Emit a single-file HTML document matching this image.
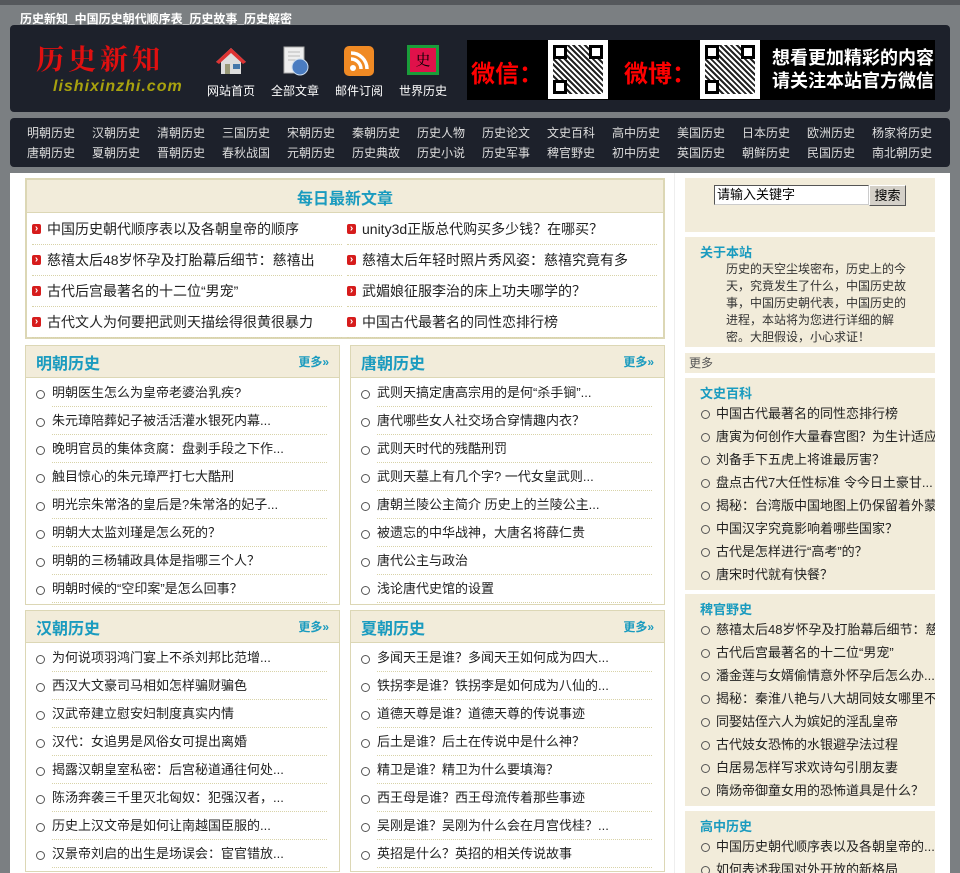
<!DOCTYPE html>
<html><head><meta charset="utf-8"><style>
*{margin:0;padding:0;box-sizing:border-box}
body{width:960px;height:873px;overflow:hidden;background:#7b7f82;font-family:"Liberation Sans","Noto Sans CJK SC","WenQuanYi Zen Hei",sans-serif;position:relative}
.abs{position:absolute}
.top{left:0;top:0;width:960px;height:5px;background:#55585c}
.ttl{left:20px;top:10px;color:#fff;font-weight:bold;font-size:12px}
.hdr{left:10px;top:25px;width:940px;height:87px;background:#1d212b;border-radius:4px}
.nav{left:10px;top:118px;width:940px;height:49px;background:#1d212b;border-radius:4px}
.nav span{position:absolute;color:#ddd;font-size:12px;white-space:nowrap}
.ico{color:#fff;font-size:12px;text-align:center;width:60px}
.main{left:10px;top:173px;width:940px;height:700px;background:#fff}
.box{background:#fff;border:1px solid #dcd7b5}
.bh{background:#f2ecda;border-bottom:1px solid #dcd7b5;height:32px;position:relative}
.bh b{position:absolute;left:10px;top:4px;color:#1a9bbf;font-size:16px}
.bh i{position:absolute;right:10px;top:7px;color:#1a9bbf;font-size:12px;font-style:normal;font-weight:bold}
ul{list-style:none}
.cl li{position:relative;height:28px;line-height:28px;font-size:13px;color:#222;padding-left:26px;white-space:nowrap;overflow:hidden}
.cl li:before{content:"";position:absolute;left:10px;top:11px;width:7px;height:7px;border:1px solid #555;border-radius:50%}
.cl li:after{content:"";position:absolute;left:26px;right:12px;bottom:0;border-bottom:1px dotted #d8d3a8}
.lt li{position:absolute;height:31px;line-height:31px;font-size:14px;color:#222;padding-left:15px;width:310px;white-space:nowrap;overflow:hidden;border-bottom:1px dotted #d8d3a8}
.lt li:before{content:"›";position:absolute;left:0;top:10px;width:9px;height:10px;line-height:9px;background:#d61c1c;color:#fff;font-size:10px;text-align:center;border-radius:2px;font-weight:bold}
.sb{background:#f2ecda;position:absolute;left:685px;width:250px;overflow:hidden}
.sb h4{color:#1a9bbf;font-size:13px;margin:5px 0 0 15px}
.sl li{position:relative;height:23px;line-height:23px;font-size:13px;color:#222;padding-left:31px;white-space:nowrap}
.sl li:before{content:"";position:absolute;left:16px;top:8px;width:7px;height:7px;border:1px solid #555;border-radius:50%}
.qr{position:absolute;background:#fff;padding:5px}
.qr div{width:100%;height:100%;background:
linear-gradient(#fff,#fff) 3px 3px/8px 8px no-repeat,linear-gradient(#000,#000) 0 0/14px 14px no-repeat,
linear-gradient(#fff,#fff) 39px 3px/8px 8px no-repeat,linear-gradient(#000,#000) 36px 0/14px 14px no-repeat,
linear-gradient(#fff,#fff) 3px 38px/8px 8px no-repeat,linear-gradient(#000,#000) 0 35px/14px 14px no-repeat,
repeating-linear-gradient(45deg,#222 0 2px,#fff 2px 4px),#fff}
</style></head><body>
<div class="abs top"></div>
<div class="abs ttl">历史新知_中国历史朝代顺序表_历史故事_历史解密</div>
<div class="abs hdr"></div>
<div class="abs" style="left:36px;top:38px;color:#e01010;font-size:28px;font-family:'Noto Serif CJK SC',serif;font-weight:bold;letter-spacing:4px">历史新知</div>
<div class="abs" style="left:53px;top:78px;color:#a8a20e;font-size:16px;font-style:italic;font-weight:bold;letter-spacing:1px">lishixinzhi.com</div>
<svg class="abs" style="left:215px;top:46px" width="32" height="30"><path d="M16 2L1 16h5v12h20V16h5z" fill="#ddd"/><path d="M16 2L1 16l3 2L16 7l12 11 3-2z" fill="#d33"/><rect x="10" y="18" width="5" height="10" fill="#997"/><rect x="18" y="18" width="7" height="5" fill="#47a"/></svg>
<svg class="abs" style="left:282px;top:46px" width="28" height="30"><rect x="2" y="1" width="20" height="26" fill="#eee" stroke="#aaa"/><path d="M6 6h12M6 10h12M6 14h8" stroke="#bbb"/><circle cx="18" cy="21" r="8" fill="#4a7cc0"/><circle cx="18" cy="21" r="8" fill="none" stroke="#cde"/></svg>
<div class="abs" style="left:344px;top:46px;width:30px;height:30px;background:#f08a24;border-radius:5px"></div>
<svg class="abs" style="left:344px;top:46px" width="30" height="30"><circle cx="9" cy="22" r="3" fill="#fff"/><path d="M7 13a10 10 0 0 1 10 10M7 7a16 16 0 0 1 16 16" stroke="#fff" stroke-width="3.5" fill="none"/></svg>
<div class="abs" style="left:407px;top:45px;width:32px;height:30px;background:#e0114a;border:3px solid #1a9d3a;font-size:15px;text-align:center;line-height:24px;font-family:'Noto Serif CJK SC',serif">史</div>
<div class="abs ico" style="left:201px;top:82px">网站首页</div>
<div class="abs ico" style="left:265px;top:82px">全部文章</div>
<div class="abs ico" style="left:329px;top:82px">邮件订阅</div>
<div class="abs ico" style="left:393px;top:82px">世界历史</div>
<div class="abs" style="left:467px;top:40px;width:468px;height:60px;background:#000"></div>
<div class="abs" style="left:471px;top:54px;color:#f00;font-size:24px;font-weight:bold">微信：</div>
<div class="qr" style="left:548px;top:40px;width:60px;height:59px"><div></div></div>
<div class="abs" style="left:624px;top:54px;color:#f00;font-size:24px;font-weight:bold">微博：</div>
<div class="qr" style="left:700px;top:40px;width:60px;height:59px"><div></div></div>
<div class="abs" style="left:772px;top:47px;color:#fff;font-size:18px;font-weight:bold;line-height:23px">想看更加精彩的内容<br>请关注本站官方微信</div>
<div class="abs nav">
<span style="left:17px;top:6px">明朝历史</span><span style="left:82px;top:6px">汉朝历史</span><span style="left:147px;top:6px">清朝历史</span><span style="left:212px;top:6px">三国历史</span><span style="left:277px;top:6px">宋朝历史</span><span style="left:342px;top:6px">秦朝历史</span><span style="left:407px;top:6px">历史人物</span><span style="left:472px;top:6px">历史论文</span><span style="left:537px;top:6px">文史百科</span><span style="left:602px;top:6px">高中历史</span><span style="left:667px;top:6px">美国历史</span><span style="left:732px;top:6px">日本历史</span><span style="left:797px;top:6px">欧洲历史</span><span style="left:862px;top:6px">杨家将历史</span>
<span style="left:17px;top:26px">唐朝历史</span><span style="left:82px;top:26px">夏朝历史</span><span style="left:147px;top:26px">晋朝历史</span><span style="left:212px;top:26px">春秋战国</span><span style="left:277px;top:26px">元朝历史</span><span style="left:342px;top:26px">历史典故</span><span style="left:407px;top:26px">历史小说</span><span style="left:472px;top:26px">历史军事</span><span style="left:537px;top:26px">稗官野史</span><span style="left:602px;top:26px">初中历史</span><span style="left:667px;top:26px">英国历史</span><span style="left:732px;top:26px">朝鲜历史</span><span style="left:797px;top:26px">民国历史</span><span style="left:862px;top:26px">南北朝历史</span>
</div>
<div class="abs main"></div>
<div class="abs" style="left:674px;top:173px;width:1px;height:700px;background:#eee"></div>
<div class="abs box" style="left:25px;top:178px;width:640px;height:161px;border-width:2px">
<div class="bh" style="height:33px"><b style="left:0;width:100%;text-align:center;top:5px">每日最新文章</b></div>
<ul class="lt">
<li style="left:5px;top:34px">中国历史朝代顺序表以及各朝皇帝的顺序</li><li style="left:320px;top:34px">unity3d正版总代购买多少钱？在哪买？</li>
<li style="left:5px;top:65px">慈禧太后48岁怀孕及打胎幕后细节：慈禧出</li><li style="left:320px;top:65px">慈禧太后年轻时照片秀风姿：慈禧究竟有多</li>
<li style="left:5px;top:96px">古代后宫最著名的十二位“男宠”</li><li style="left:320px;top:96px">武媚娘征服李治的床上功夫哪学的？</li>
<li style="left:5px;top:127px">古代文人为何要把武则天描绘得很黄很暴力</li><li style="left:320px;top:127px">中国古代最著名的同性恋排行榜</li>
</ul></div>
<div class="abs box" style="left:25px;top:345px;width:315px;height:260px"><div class="bh"><b>明朝历史</b><i>更多»</i></div><ul class="cl" style="margin-top:1px">
<li>明朝医生怎么为皇帝老婆治乳疾?</li><li>朱元璋陪葬妃子被活活灌水银死内幕...</li><li>晚明官员的集体贪腐：盘剥手段之下作...</li><li>触目惊心的朱元璋严打七大酷刑</li><li>明光宗朱常洛的皇后是?朱常洛的妃子...</li><li>明朝大太监刘瑾是怎么死的？</li><li>明朝的三杨辅政具体是指哪三个人？</li><li>明朝时候的“空印案”是怎么回事？</li></ul></div>
<div class="abs box" style="left:350px;top:345px;width:315px;height:260px"><div class="bh"><b>唐朝历史</b><i>更多»</i></div><ul class="cl" style="margin-top:1px">
<li>武则天搞定唐高宗用的是何“杀手锏”...</li><li>唐代哪些女人社交场合穿情趣内衣？</li><li>武则天时代的残酷刑罚</li><li>武则天墓上有几个字? 一代女皇武则...</li><li>唐朝兰陵公主简介 历史上的兰陵公主...</li><li>被遗忘的中华战神，大唐名将薛仁贵</li><li>唐代公主与政治</li><li>浅论唐代史馆的设置</li></ul></div>
<div class="abs box" style="left:25px;top:610px;width:315px;height:262px"><div class="bh"><b>汉朝历史</b><i>更多»</i></div><ul class="cl" style="margin-top:1px">
<li>为何说项羽鸿门宴上不杀刘邦比范增...</li><li>西汉大文豪司马相如怎样骗财骗色</li><li>汉武帝建立慰安妇制度真实内情</li><li>汉代：女追男是风俗女可提出离婚</li><li>揭露汉朝皇室私密：后宫秘道通往何处...</li><li>陈汤奔袭三千里灭北匈奴：犯强汉者，...</li><li>历史上汉文帝是如何让南越国臣服的...</li><li>汉景帝刘启的出生是场误会：宦官错放...</li></ul></div>
<div class="abs box" style="left:350px;top:610px;width:315px;height:262px"><div class="bh"><b>夏朝历史</b><i>更多»</i></div><ul class="cl" style="margin-top:1px">
<li>多闻天王是谁？多闻天王如何成为四大...</li><li>铁拐李是谁？铁拐李是如何成为八仙的...</li><li>道德天尊是谁？道德天尊的传说事迹</li><li>后土是谁？后土在传说中是什么神？</li><li>精卫是谁？精卫为什么要填海？</li><li>西王母是谁？西王母流传着那些事迹</li><li>吴刚是谁？吴刚为什么会在月宫伐桂？...</li><li>英招是什么？英招的相关传说故事</li></ul></div>
<div class="sb" style="top:178px;height:54px"><div style="position:absolute;left:29px;top:7px;width:155px;height:20px;background:#fff;border:1px solid #555;border-right-color:#ccc;border-bottom-color:#ccc;font-size:13px;line-height:18px;padding-left:2px">请输入关键字</div><div style="position:absolute;left:184px;top:7px;width:37px;height:21px;background:#d4d0c8;border:1px solid #555;border-top-color:#fff;border-left-color:#fff;font-size:13px;text-align:center;line-height:19px">搜索</div></div>
<div class="sb" style="top:237px;height:110px"><h4 style="margin-top:5px">关于本站</h4><div style="font-size:12px;color:#333;line-height:17px;padding:0 22px 0 41px">历史的天空尘埃密布，历史上的今天，究竟发生了什么，中国历史故事，中国历史朝代表，中国历史的进程，本站将为您进行详细的解密。大胆假设，小心求证！</div></div>
<div class="sb" style="top:353px;height:20px;font-size:12px;color:#555;line-height:20px;padding-left:4px">更多</div>
<div class="sb" style="top:378px;height:212px"><h4>文史百科</h4><ul class="sl">
<li>中国古代最著名的同性恋排行榜</li><li>唐寅为何创作大量春宫图？为生计适应</li><li>刘备手下五虎上将谁最厉害？</li><li>盘点古代7大任性标准 令今日土豪甘...</li><li>揭秘：台湾版中国地图上仍保留着外蒙</li><li>中国汉字究竟影响着哪些国家？</li><li>古代是怎样进行“高考”的？</li><li>唐宋时代就有快餐？</li></ul></div>
<div class="sb" style="top:594px;height:212px"><h4>稗官野史</h4><ul class="sl">
<li>慈禧太后48岁怀孕及打胎幕后细节：慈禧</li><li>古代后宫最著名的十二位“男宠”</li><li>潘金莲与女婿偷情意外怀孕后怎么办...</li><li>揭秘：秦淮八艳与八大胡同妓女哪里不同</li><li>同娶姑侄六人为嫔妃的淫乱皇帝</li><li>古代妓女恐怖的水银避孕法过程</li><li>白居易怎样写求欢诗勾引朋友妻</li><li>隋炀帝御童女用的恐怖道具是什么？</li></ul></div>
<div class="sb" style="top:811px;height:62px"><h4>高中历史</h4><ul class="sl">
<li>中国历史朝代顺序表以及各朝皇帝的...</li><li>如何表述我国对外开放的新格局</li></ul></div>
</body></html>
